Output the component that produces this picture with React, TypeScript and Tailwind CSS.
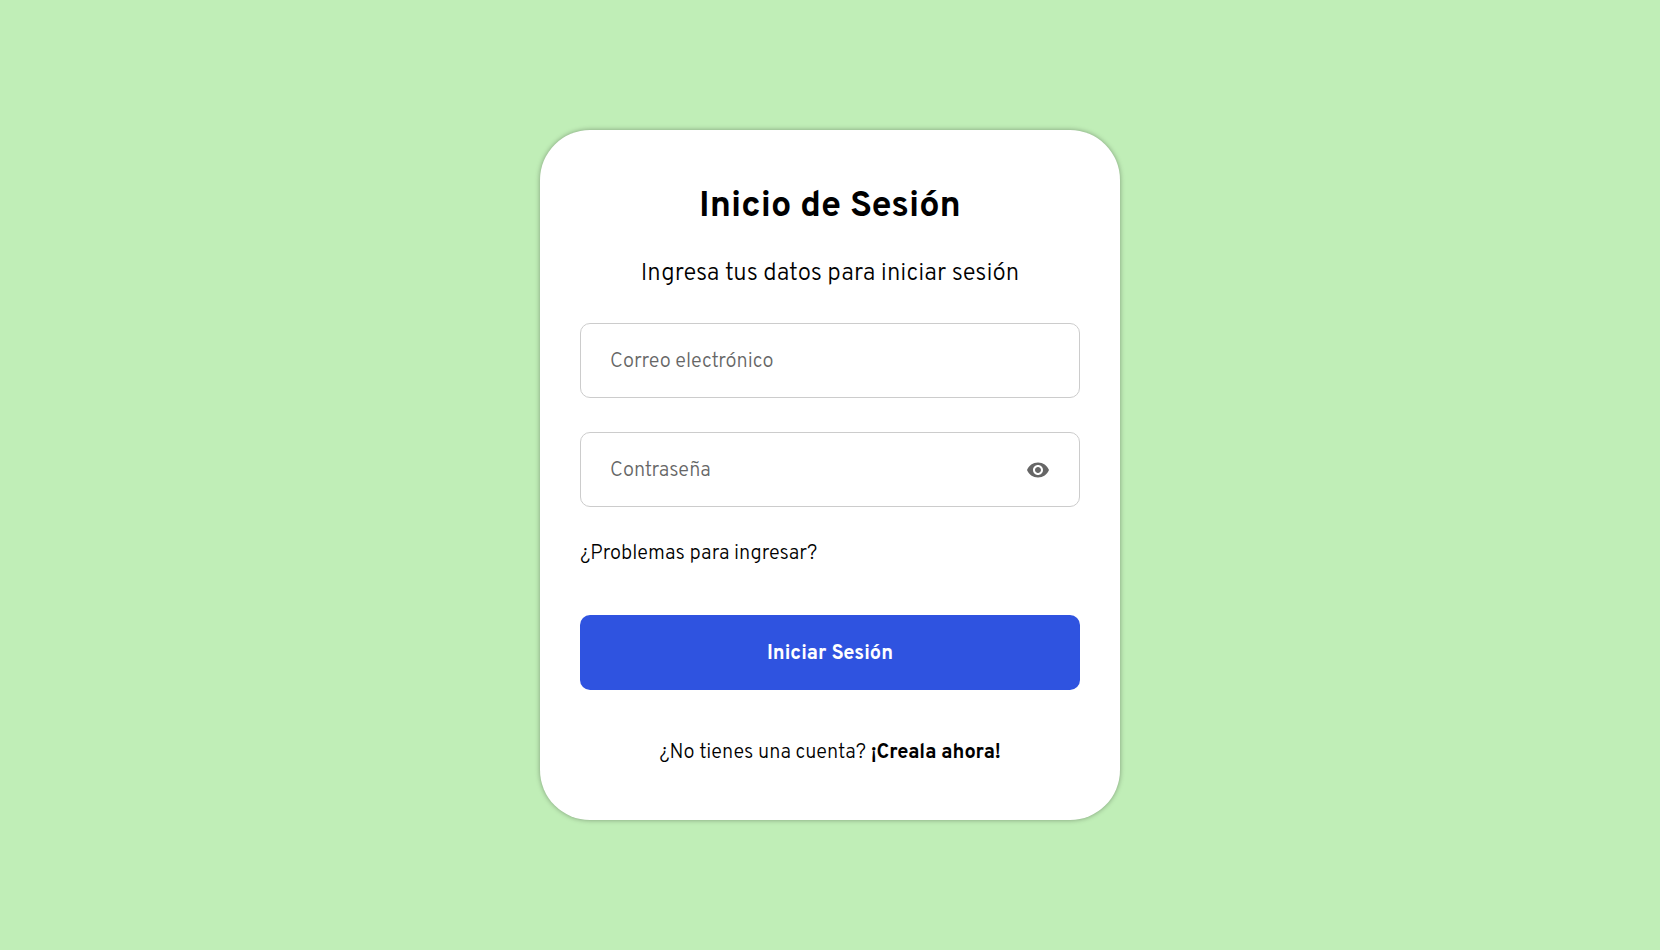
import { useState } from "react";
import type { FormEvent } from "react";
import { MdVisibility } from "react-icons/md";

const fieldClass =
  "h-[75px] w-full rounded-[10px] border border-[#cccccc] bg-white pt-0.5 pl-[29px] text-xl font-light text-black outline-none placeholder:text-[#666666] focus:border-[#2f53e0]";

export default function App() {
  const [visible, setVisible] = useState(false);

  return (
    <main className="flex min-h-screen items-center justify-center bg-[#c0eeb7] font-['Overpass','Roboto',sans-serif] text-black">
      <section className="w-full max-w-[580px] rounded-[50px] bg-white px-10 pt-[57px] pb-[55px] shadow-[0_0_5px_rgba(0,0,0,0.35)]">
        <h1 className="text-center text-4xl font-bold">Inicio de Sesión</h1>
        <p className="mt-[31px] text-center text-2xl font-light">
          Ingresa tus datos para iniciar sesión
        </p>
        <form
          className="mt-[33px]"
          onSubmit={(event: FormEvent) => event.preventDefault()}
        >
          <input
            type="email"
            aria-label="Correo electrónico"
            placeholder="Correo electrónico"
            className={`block pr-[29px] ${fieldClass}`}
          />
          <div className="relative mt-[34px]">
            <input
              type={visible ? "text" : "password"}
              aria-label="Contraseña"
              placeholder="Contraseña"
              className={`block pr-[66px] ${fieldClass}`}
            />
            <button
              type="button"
              aria-label="Mostrar contraseña"
              aria-pressed={visible}
              onClick={() => setVisible(!visible)}
              className="absolute inset-y-0 right-[30px] flex items-center text-[#666666]"
            >
              <MdVisibility className="size-6" />
            </button>
          </div>
          <a href="#ayuda" className="mt-[35px] block w-fit text-xl/6 font-light">
            ¿Problemas para ingresar?
          </a>
          <button
            type="submit"
            className="mt-[49px] block h-[75px] w-full rounded-[10px] bg-[#2f53e0] pt-0.5 text-xl font-bold text-white"
          >
            Iniciar Sesión
          </button>
        </form>
        <p className="mt-[51px] text-center text-xl/6 font-light">
          ¿No tienes una cuenta?{" "}
          <a href="#registro" className="font-bold">
            ¡Creala ahora!
          </a>
        </p>
      </section>
    </main>
  );
}
